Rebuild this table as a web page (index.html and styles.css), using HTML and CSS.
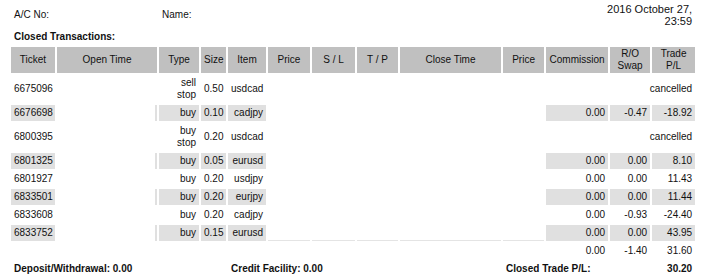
FILE: index.html
```html
<!DOCTYPE html>
<html>
<head>
<meta charset="utf-8">
<title>Statement</title>
<link rel="stylesheet" href="styles.css">
</head>
<body>
<table class="report">
  <colgroup>
    <col class="c-ticket"><col class="c-open"><col class="c-type"><col class="c-size"><col class="c-item"><col class="c-price"><col class="c-sl"><col class="c-tp"><col class="c-close"><col class="c-price2"><col class="c-comm"><col class="c-swap"><col class="c-pl">
  </colgroup>
  <tr class="info">
    <td colspan="2">A/C No:</td>
    <td colspan="8">Name:</td>
    <td colspan="3" class="date">2016 October 27,<br>23:59</td>
  </tr>
  <tr class="section">
    <td colspan="13">Closed Transactions:</td>
  </tr>
  <tr class="head">
    <th>Ticket</th><th>Open Time</th><th>Type</th><th>Size</th><th>Item</th><th>Price</th><th>S / L</th><th>T / P</th><th>Close Time</th><th>Price</th><th>Commission</th><th>R/O<br>Swap</th><th>Trade<br>P/L</th>
  </tr>
  <tr class="row">
    <td>6675096</td><td></td><td class="r">sell stop</td><td class="r">0.50</td><td class="r">usdcad</td><td></td><td></td><td></td><td></td><td></td><td colspan="3" class="r">cancelled</td>
  </tr>
  <tr class="row alt">
    <td class="g">6676698</td><td class="edge"></td><td class="g r">buy</td><td class="g r">0.10</td><td class="g r">cadjpy</td><td></td><td></td><td></td><td></td><td></td><td class="g r">0.00</td><td class="g r">-0.47</td><td class="g r">-18.92</td>
  </tr>
  <tr class="row">
    <td>6800395</td><td></td><td class="r">buy stop</td><td class="r">0.20</td><td class="r">usdcad</td><td></td><td></td><td></td><td></td><td></td><td colspan="3" class="r">cancelled</td>
  </tr>
  <tr class="row alt">
    <td class="g">6801325</td><td class="edge"></td><td class="g r">buy</td><td class="g r">0.05</td><td class="g r">eurusd</td><td></td><td></td><td></td><td></td><td></td><td class="g r">0.00</td><td class="g r">0.00</td><td class="g r">8.10</td>
  </tr>
  <tr class="row">
    <td>6801927</td><td></td><td class="r">buy</td><td class="r">0.20</td><td class="r">usdjpy</td><td></td><td></td><td></td><td></td><td></td><td class="r">0.00</td><td class="r">0.00</td><td class="r">11.43</td>
  </tr>
  <tr class="row alt">
    <td class="g">6833501</td><td class="edge"></td><td class="g r">buy</td><td class="g r">0.20</td><td class="g r">eurjpy</td><td></td><td></td><td></td><td></td><td></td><td class="g r">0.00</td><td class="g r">0.00</td><td class="g r">11.44</td>
  </tr>
  <tr class="row">
    <td>6833608</td><td></td><td class="r">buy</td><td class="r">0.20</td><td class="r">cadjpy</td><td></td><td></td><td></td><td></td><td></td><td class="r">0.00</td><td class="r">-0.93</td><td class="r">-24.40</td>
  </tr>
  <tr class="row alt">
    <td class="g">6833752</td><td class="edge"></td><td class="g r">buy</td><td class="g r">0.15</td><td class="g r">eurusd</td><td class="under"></td><td class="under"></td><td class="under"></td><td class="under"></td><td class="under"></td><td class="g r">0.00</td><td class="g r">0.00</td><td class="g r">43.95</td>
  </tr>
  <tr class="row">
    <td colspan="10"></td><td class="r">0.00</td><td class="r">-1.40</td><td class="r">31.60</td>
  </tr>
  <tr class="row foot">
    <td colspan="4">Deposit/Withdrawal: 0.00</td>
    <td colspan="5">Credit Facility: 0.00</td>
    <td colspan="2">Closed Trade P/L:</td>
    <td colspan="2" class="r">30.20</td>
  </tr>
</table>
</body>
</html>
```

FILE: styles.css
```css
html, body {
  margin: 0;
  padding: 0;
  background: #ffffff;
}

body {
  font-family: "Liberation Sans", Arial, sans-serif;
  font-size: 10px;
  color: #111111;
}

.report {
  margin-left: 9px;
  width: 688px;
  table-layout: fixed;
  border-collapse: separate;
  border-spacing: 2px;
}

.c-ticket { width: 44px; }
.c-open { width: 100px; }
.c-type { width: 40px; }
.c-size { width: 25px; }
.c-item { width: 38px; }
.c-price { width: 42px; }
.c-sl { width: 43px; }
.c-tp { width: 41px; }
.c-close { width: 101px; }
.c-price2 { width: 41px; }
.c-comm { width: 62px; }
.c-swap { width: 40px; }
.c-pl { width: 43px; }

.report td,
.report th {
  padding: 2px 3px;
  line-height: 12px;
  vertical-align: middle;
  text-align: left;
  font-weight: normal;
}

.info td {
  padding: 1px 3px;
}

.info .date {
  text-align: right;
  font-size: 11px;
  white-space: nowrap;
}

.section td {
  font-weight: bold;
  padding: 1px 3px 2px;
}

.head th {
  background: #c0c0c0;
  text-align: center;
  padding: 1px 3px;
  overflow: hidden;
}

.report td.r {
  text-align: right;
}

.report td.g {
  background: #e0e0e0;
}

.report td.edge {
  background: linear-gradient(to left, #e0e0e0 2px, #ffffff 2px);
}

.report td.under {
  background: linear-gradient(to top, #e4e4e4 1px, #ffffff 1px);
}

.foot td {
  font-weight: bold;
  white-space: nowrap;
}
```
